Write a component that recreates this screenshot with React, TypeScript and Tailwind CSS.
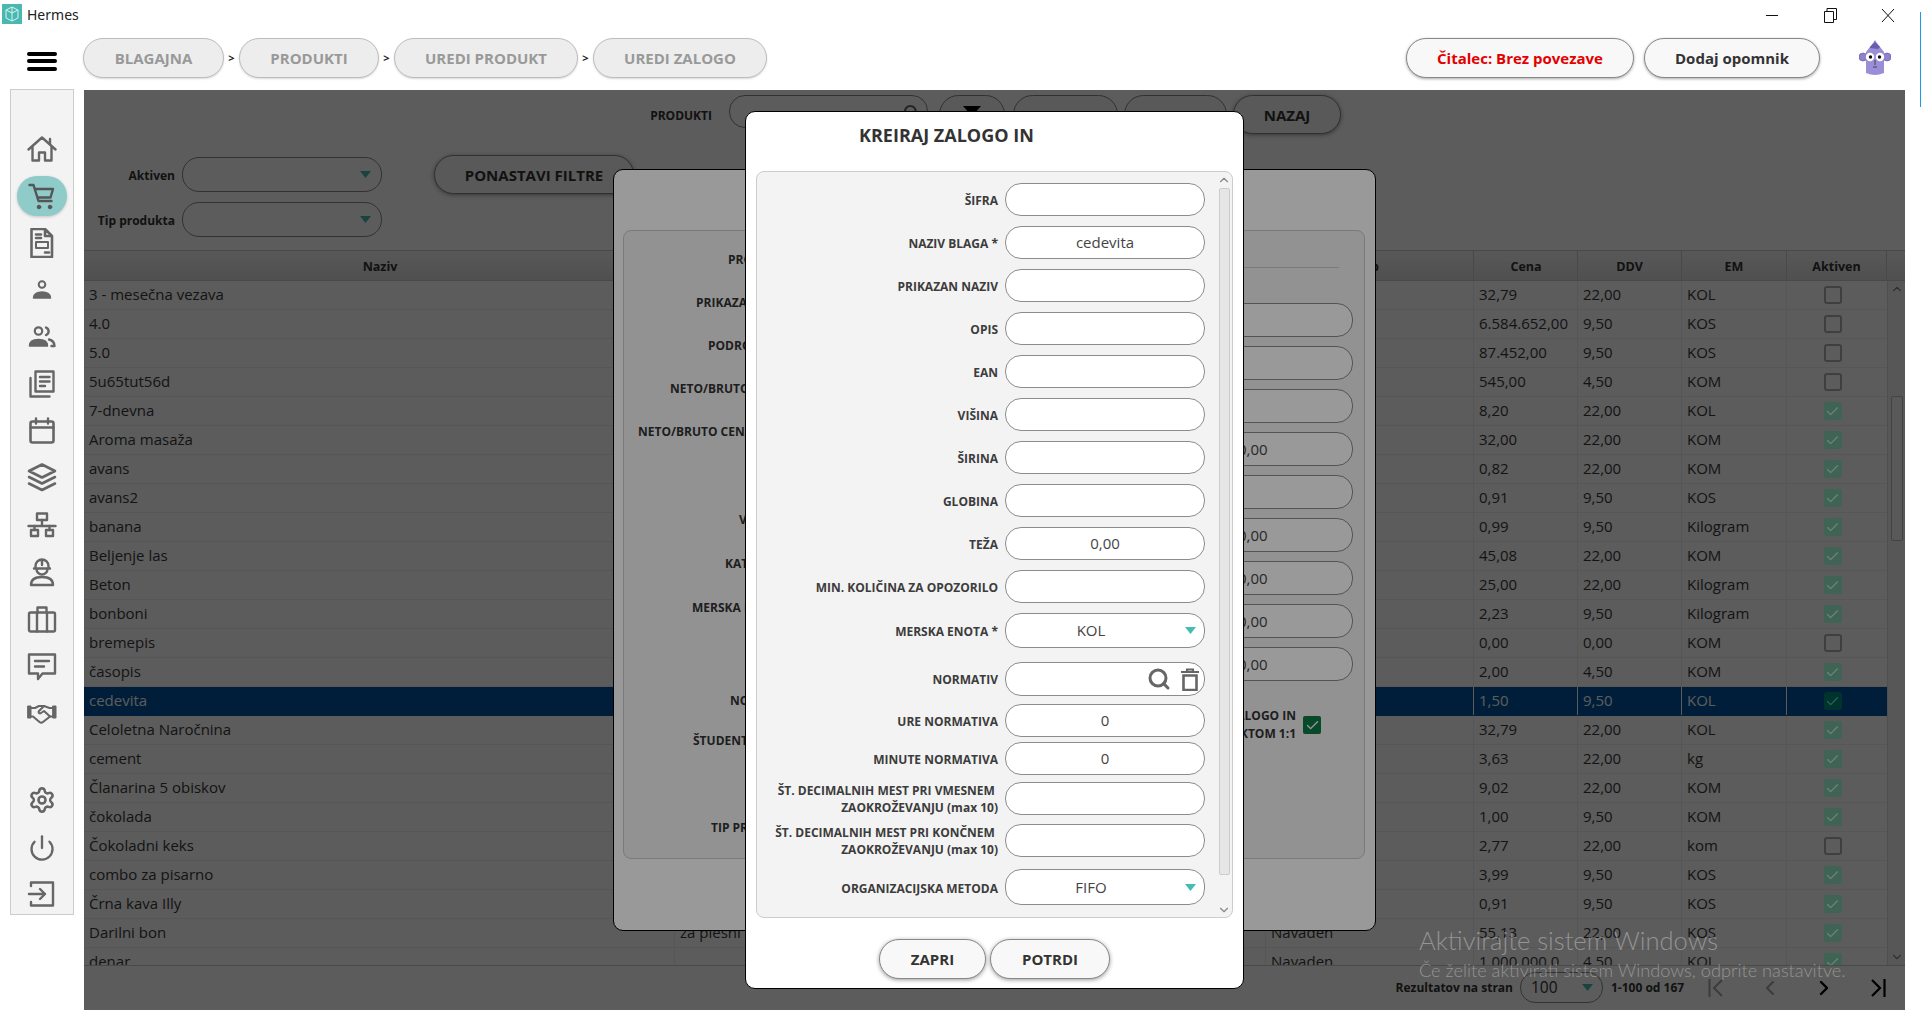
import React from 'react';
import { Check, ChevronDown, ChevronLeft, ChevronRight, ChevronUp, Power, Search, Settings } from 'lucide-react';

const rows = [
  ['3 - mesečna vezava', '', '', '32,79', '22,00', 'KOL', false],
  ['4.0', '', '', '6.584.652,00', '9,50', 'KOS', false],
  ['5.0', '', '', '87.452,00', '9,50', 'KOS', false],
  ['5u65tut56d', '', '', '545,00', '4,50', 'KOM', false],
  ['7-dnevna', '', '', '8,20', '22,00', 'KOL', true],
  ['Aroma masaža', '', '', '32,00', '22,00', 'KOM', true],
  ['avans', '', '', '0,82', '22,00', 'KOM', true],
  ['avans2', '', '', '0,91', '9,50', 'KOS', true],
  ['banana', '', '', '0,99', '9,50', 'Kilogram', true],
  ['Beljenje las', '', '', '45,08', '22,00', 'KOM', true],
  ['Beton', '', '', '25,00', '22,00', 'Kilogram', true],
  ['bonboni', '', '', '2,23', '9,50', 'Kilogram', true],
  ['bremepis', '', '', '0,00', '0,00', 'KOM', false],
  ['časopis', '', '', '2,00', '4,50', 'KOM', true],
  ['cedevita', '', '', '1,50', '9,50', 'KOL', true],
  ['Celoletna Naročnina', '', '', '32,79', '22,00', 'KOL', true],
  ['cement', '', '', '3,63', '22,00', 'kg', true],
  ['Članarina 5 obiskov', '', '', '9,02', '22,00', 'KOM', true],
  ['čokolada', '', '', '1,00', '9,50', 'KOM', true],
  ['Čokoladni keks', '', '', '2,77', '22,00', 'kom', false],
  ['combo za pisarno', '', '', '3,99', '9,50', 'KOS', true],
  ['Črna kava Illy', '', '', '0,91', '9,50', 'KOS', true],
  ['Darilni bon', 'za plesni', 'Navaden', '55,13', '22,00', 'KOS', true],
  ['denar', '', 'Navaden', '1.000.000,0', '4,50', 'KOL', true],
] as const;

const backLabels = [
  { text: 'PRODUKT', cls: 'h-[43px] pl-[103px]' },
  { text: 'PRIKAZAN NAZIV', cls: 'h-[43px] pl-[71px]' },
  { text: 'PODROČJE', cls: 'h-[43px] pl-[83px]' },
  { text: 'NETO/BRUTO', cls: 'h-[43px] pl-[45px]' },
  { text: 'NETO/BRUTO CENA', cls: 'h-[43px] pl-[13px]' },
  { text: 'VIŠINA', cls: 'mt-[45px] h-[44px] pl-[114px]' },
  { text: 'KATEGORIJA', cls: 'h-[44px] pl-[100px]' },
  { text: 'MERSKA ENOTA', cls: 'h-[43px] pl-[67px]' },
  { text: 'NORMATIV', cls: 'mt-[50px] h-[43px] pl-[105px]' },
  { text: 'ŠTUDENTSKI', cls: 'h-[37px] pl-[68px]' },
  { text: 'TIP PRODUKTA', cls: 'mt-[47px] h-[43px] pl-[86px]' },
];

const backInputs = ['', '', '', '0,00', '', '0,00', '0,00', '0,00', '0,00'];

const formRows = [
  { label: 'ŠIFRA', cls: 'h-[33px]', kind: 'input', value: '' },
  { label: 'NAZIV BLAGA *', cls: 'mt-[10px] h-[33px]', kind: 'input', value: 'cedevita' },
  { label: 'PRIKAZAN NAZIV', cls: 'mt-[10px] h-[33px]', kind: 'input', value: '' },
  { label: 'OPIS', cls: 'mt-[10px] h-[33px]', kind: 'input', value: '' },
  { label: 'EAN', cls: 'mt-[10px] h-[33px]', kind: 'input', value: '' },
  { label: 'VIŠINA', cls: 'mt-[10px] h-[33px]', kind: 'input', value: '' },
  { label: 'ŠIRINA', cls: 'mt-[10px] h-[33px]', kind: 'input', value: '' },
  { label: 'GLOBINA', cls: 'mt-[10px] h-[33px]', kind: 'input', value: '' },
  { label: 'TEŽA', cls: 'mt-[10px] h-[33px]', kind: 'input', value: '0,00' },
  { label: 'MIN. KOLIČINA ZA OPOZORILO', cls: 'mt-[10px] h-[33px]', kind: 'input', value: '' },
  { label: 'MERSKA ENOTA *', cls: 'mt-[10px] h-[35px]', kind: 'select', value: 'KOL' },
  { label: 'NORMATIV', cls: 'mt-[14px] h-[34px]', kind: 'search', value: '' },
  { label: 'URE NORMATIVA', cls: 'mt-[8px] h-[33px]', kind: 'input', value: '0' },
  { label: 'MINUTE NORMATIVA', cls: 'mt-[5px] h-[33px]', kind: 'input', value: '0' },
  { label: 'ŠT. DECIMALNIH MEST PRI VMESNEM\u00a0', label2: 'ZAOKROŽEVANJU (max 10)', cls: 'mt-[7px] h-[33px]', kind: 'input', value: '' },
  { label: 'ŠT. DECIMALNIH MEST PRI KONČNEM\u00a0', label2: 'ZAOKROŽEVANJU (max 10)', cls: 'mt-[9px] h-[33px]', kind: 'input', value: '' },
  { label: 'ORGANIZACIJSKA METODA', cls: 'mt-[12px] h-[36px]', kind: 'select', value: 'FIFO' },
];

const Caret = () => (
  <svg width="11" height="7" viewBox="0 0 11 7" className="shrink-0">
    <path d="M0 0h11L5.5 7z" fill="#45bdb2" />
  </svg>
);

const NavIcon = ({ children }: { children: React.ReactNode }) => (
  <svg width="30" height="30" viewBox="0 0 30 30" fill="none" stroke="#666" strokeWidth="2.4" strokeLinejoin="round" strokeLinecap="round">
    {children}
  </svg>
);

const sideIcons = [
  <NavIcon key="home"><path d="M1.5 15.5 15 3.5l13.5 12M5.5 12.5v14h6.5v-8h6v8h6.5v-14M23 5v5" /></NavIcon>,
  <NavIcon key="cart"><path d="M2.5 4h4l5 16h13M8 8h18l-2.5 8.5H10.5" stroke="#555" /><circle cx="12" cy="26" r="1.8" fill="#555" stroke="#555" strokeWidth="1" /><circle cx="23" cy="26" r="1.8" fill="#555" stroke="#555" strokeWidth="1" /></NavIcon>,
  <NavIcon key="doc"><path d="M4.500 1h13.500l7 7v21H4.500zM18 1v7h7M9 6.500h5M9 10h5M18 24.500h4" strokeWidth="2.600" /><rect x="9" y="14" width="12" height="6" strokeWidth="2" /></NavIcon>,
  <NavIcon key="user"><circle cx="15" cy="9.500" r="3.300" strokeWidth="2" /><path d="M6.500 23c0-4 4-6 8.500-6s8.500 2 8.500 6z" fill="#666" strokeWidth="1.500" /></NavIcon>,
  <NavIcon key="users"><circle cx="11.500" cy="9" r="3.700" strokeWidth="2.200" /><path d="M2.500 24c0-4.500 4-6.500 9-6.500s9 2 9 6.500z" fill="#666" strokeWidth="1.500" /><path d="M19 5.500a4 4 0 0 1 0 7.500M22 17.500c3 .8 5.500 2.800 5.500 6.500h-3" /></NavIcon>,
  <NavIcon key="news"><path d="M3.500 9v18.500h19" /><rect x="8.500" y="2.500" width="18" height="20" /><path d="M13 8h9.500M13 12.500h9.500M13 17h5" /></NavIcon>,
  <NavIcon key="cal"><rect x="3.500" y="5.500" width="23" height="21" rx="2" strokeWidth="2.600" /><path d="M3.500 11.500h23M9 2.500v5M21 2.500v5" /></NavIcon>,
  <NavIcon key="layers"><path d="M15 1.500 28 8 15 14.500 2 8zM2 14l13 6.500L28 14M2 20.500 15 27l13-6.500" strokeWidth="2.600" /></NavIcon>,
  <NavIcon key="net"><rect x="10" y="3.500" width="10" height="6.500" /><path d="M15 10v6M1.500 16h27" /><rect x="4" y="20" width="7" height="6" /><rect x="19" y="20" width="7" height="6" /><path d="M7.500 16v4M22.500 16v4" /></NavIcon>,
  <NavIcon key="worker"><path d="M8.500 11.500V9a6.500 6.500 0 0 1 13 0v2.500zM15 3v5M7 11.500h16M9.500 12a5.500 5.500 0 0 0 11 0" /><path d="M4 28c0-6 5-8 11-8s11 2 11 8z" /></NavIcon>,
  <NavIcon key="case"><rect x="2" y="8.500" width="26" height="19" rx="1.500" /><path d="M10.500 8.500V3.500h9v5M10 8.500v19M20 8.500v19" /></NavIcon>,
  <NavIcon key="chat"><path d="M2 3.500h26v19H15.500L11 28v-5.500H2z" /><path d="M8 10h14M8 15.500h9" /></NavIcon>,
  <NavIcon key="hands">
    <path d="M1 8h3v12H1zM26 8h3v12h-3z" fill="#666" strokeWidth="1" />
    <path d="M4.500 10H8l4-2h5l5.500 2H26M4.500 18.500H6l6.500 5.500c1 .8 2.500 .8 3.500 0l7-5.500h3" strokeWidth="2.100" />
    <path d="m17 8-5 5c-1.200 1.400.5 3 2 2l3-2 6 5.500" strokeWidth="2.100" />
  </NavIcon>,
];

const FormLabel = ({ row }: { row: (typeof formRows)[number] }) => (
  <div className={`w-[241px] text-right text-[12px] leading-[17px] font-bold text-[#3c3c3c] whitespace-nowrap ${row.label2 || row.kind === 'search' ? '' : 'pt-[2px]'}`}>
    {row.label}
    {row.label2 && <br />}
    {row.label2}
  </div>
);

const FormField = ({ row }: { row: (typeof formRows)[number] }) => (
  <div className="ml-[7px] w-[200px] h-full flex items-center rounded-[16px] border-[1.5px] border-[#8c8c8c] bg-white text-[15px] text-[#444]">
    {row.kind === 'input' && <span className="flex-1 text-center">{row.value}</span>}
    {row.kind === 'select' && (
      <>
        <span className="flex-1 text-center">{row.value}</span>
        <span className="w-[28px] flex justify-center"><Caret /></span>
      </>
    )}
    {row.kind === 'search' && (
      <span className="ml-auto mr-[5px] flex items-center gap-[10px]">
        <Search size={24} color="#666" strokeWidth={3} />
        <svg width="18" height="23" viewBox="0 0 18 23" fill="none" stroke="#666" strokeWidth="2.2">
          <path d="M0 4h18M6 4V1.500h6V4" />
          <path d="M2.500 7.500h13V22h-13z" strokeWidth="2.600" />
        </svg>
      </span>
    )}
  </div>
);

const FrontModal = () => (
  <div className="absolute left-[661px] top-[21px] w-[499px] h-[878px] rounded-[10px] border border-black bg-white flex flex-col items-center">
    <div className="h-[59px] w-full shrink-0 pl-[113px] pt-[11px] text-[18px] leading-[25px] font-bold text-[#333]">KREIRAJ ZALOGO IN</div>
    <div className="w-[477px] h-[747px] shrink-0 rounded-[8px] border border-[#ccc] bg-[#f3f3f3] flex">
      <div className="flex-1 pt-[11px] flex flex-col">
        {formRows.map(row => (
          <div key={row.label} className={`flex items-center ${row.cls}`}>
            <FormLabel row={row} />
            <FormField row={row} />
          </div>
        ))}
      </div>
      <div className="w-[16px] shrink-0 flex flex-col items-center text-[#888]">
        <ChevronUp size={14} className="mt-[1px] shrink-0" />
        <div className="w-[11px] h-[688px] mt-[1px] rounded-[2px] border border-[#ccc] bg-[#e6e6e6]" />
        <ChevronDown size={14} className="mt-[28px] shrink-0" />
      </div>
    </div>
    <div className="mt-[21px] flex gap-[4px] self-start ml-[133px]">
      <div className="w-[107px] h-[40px] pt-[1px] rounded-[20px] border-[1.5px] border-[#888] bg-[#f8f8f8] shadow-[0_1px_4px_rgba(0,0,0,0.4)] flex items-center justify-center text-[15px] font-bold text-[#333]">ZAPRI</div>
      <div className="w-[120px] h-[40px] pt-[1px] rounded-[20px] border-[1.5px] border-[#888] bg-[#f8f8f8] shadow-[0_1px_4px_rgba(0,0,0,0.4)] flex items-center justify-center text-[15px] font-bold text-[#333]">POTRDI</div>
    </div>
  </div>
);

const BackModal = () => (
  <div className="absolute left-[529px] top-[79px] w-[763px] h-[762px] rounded-[10px] border border-black bg-white">
    <div className="ml-[9px] mt-[60px] w-[742px] h-[629px] rounded-[8px] border border-[#ccc] bg-[#f3f3f3] flex">
      <div className="w-[380px] pl-[1px] pt-[7px] flex flex-col text-[12px] font-bold text-[#333] whitespace-nowrap">
        {backLabels.map(l => (
          <div key={l.text} className={`flex items-center ${l.cls}`}>{l.text}</div>
        ))}
      </div>
      <div className="ml-auto mr-[11px] w-[205px] pt-[36px] flex flex-col">
        <div className="w-[191px] h-px bg-[#ccc] mb-[35px]" />
        <div className="flex flex-col gap-[9px]">
          {backInputs.map((v, i) => (
            <div key={i} className="h-[34px] rounded-[16px] border-[1.5px] border-[#8c8c8c] bg-white flex items-center pl-[89px] text-[15px] text-[#444]">{v}</div>
          ))}
        </div>
        <div className="mt-[26px] flex items-center">
          <div className="w-[148px] text-right text-[12px] leading-[18px] font-bold text-[#333] whitespace-nowrap">ZALOGO IN<br />PRODUKTOM 1:1</div>
          <div className="ml-[7px] w-[18px] h-[18px] rounded-[2px] bg-[#0c7b43] flex items-center justify-center">
            <Check size={15} color="#fff" strokeWidth={2.2} />
          </div>
        </div>
      </div>
    </div>
  </div>
);

const Cell = ({ w, selected, children }: { w: string; selected: boolean; children: React.ReactNode }) => (
  <div className={`${w} h-full shrink-0 flex items-center pl-[5px] pb-[2px] whitespace-nowrap overflow-hidden border-r ${selected ? 'border-white' : 'border-[#eee]'}`}>{children}</div>
);

const TableRow = ({ row, selected }: { row: (typeof rows)[number]; selected: boolean }) => (
  <div className={`h-[29px] shrink-0 flex border-b ${selected ? 'bg-[#0056a1] text-white border-[#0056a1]' : 'bg-white text-[#3a3a3a] border-[#eee]'}`}>
    <Cell w="w-[591px]" selected={selected}>{row[0]}</Cell>
    <Cell w="w-[591px]" selected={selected}>{row[1]}</Cell>
    <Cell w="w-[208px]" selected={selected}>{row[2]}</Cell>
    <Cell w="w-[104px]" selected={selected}>{row[3]}</Cell>
    <Cell w="w-[104px]" selected={selected}>{row[4]}</Cell>
    <Cell w="w-[105px]" selected={selected}>{row[5]}</Cell>
    <div className="w-[100px] h-full shrink-0 flex items-center justify-center pr-[9px]">
      {row[6] ? (
        <div className={`relative z-50 w-[18px] h-[18px] rounded-[3px] flex items-center justify-center ${selected ? 'bg-[#00332e]' : 'bg-[#3f6355]'}`}>
          <Check size={15} color={selected ? '#2e6658' : '#72847a'} strokeWidth={1.8} />
        </div>
      ) : (
        <div className="w-[18px] h-[18px] rounded-[3px] border-2 border-[#b0b0b0]" />
      )}
    </div>
  </div>
);

const Main = () => (
  <main className="relative w-[1821px] h-[920px] bg-white overflow-hidden flex flex-col text-[#333]">
    <div className="h-[160px] shrink-0 pt-[5px]">
      <div className="flex">
        <div className="w-[628px] h-[39px] pt-[2px] flex items-center justify-end text-[12px] font-bold">PRODUKTI</div>
        <div className="ml-[17px] w-[199px] h-[33px] rounded-[16px] border-[1.5px] border-[#8c8c8c] flex items-center justify-end pr-[8px]"><Search size={16} color="#666" strokeWidth={3} /></div>
        <div className="ml-[11px] w-[66px] h-[39px] rounded-[20px] border-[1.5px] border-[#888] bg-[#f8f8f8] flex justify-center pt-[10px]">
          <svg width="18" height="18" viewBox="0 0 18 18"><path d="M0 0h18l-7 8v9l-4-3V8z" fill="#000" /></svg>
        </div>
        <div className="ml-[8px] w-[105px] h-[39px] rounded-[20px] border-[1.5px] border-[#888] bg-[#f8f8f8]" />
        <div className="ml-[6px] w-[103px] h-[39px] rounded-[20px] border-[1.5px] border-[#888] bg-[#f8f8f8]" />
        <div className="ml-[6px] w-[108px] h-[39px] pt-[1px] rounded-[20px] border-[1.5px] border-[#888] bg-[#f8f8f8] shadow-[0_1px_4px_rgba(0,0,0,0.4)] flex items-center justify-center text-[15px] font-bold">NAZAJ</div>
      </div>
      <div className="mt-[21px] flex items-start">
        <div className="pt-[2px] flex flex-col gap-[10px]">
          {['Aktiven', 'Tip produkta'].map(t => (
            <div key={t} className="flex items-center h-[35px]">
              <div className="w-[91px] pt-[2px] text-right text-[12px] font-bold">{t}</div>
              <div className="ml-[7px] w-[200px] h-[35px] rounded-[17px] border-[1.5px] border-[#8c8c8c] flex items-center justify-end pr-[10px]"><Caret /></div>
            </div>
          ))}
        </div>
        <div className="ml-[52px] w-[200px] h-[39px] pt-[1px] rounded-[20px] border-[1.5px] border-[#888] bg-[#f8f8f8] shadow-[0_1px_4px_rgba(0,0,0,0.4)] flex items-center justify-center text-[15px] font-bold">PONASTAVI FILTRE</div>
      </div>
    </div>

    <div className="h-[31px] shrink-0 flex text-[12.5px] font-bold border-y border-[#ccc] bg-gradient-to-b from-[#f6f6f6] to-[#dedede]">
      {[['Naziv', 'w-[591px] pl-[2px]'], ['', 'w-[591px]'], ['Tip', 'w-[208px]'], ['Cena', 'w-[104px] pl-[1px]'], ['DDV', 'w-[104px]'], ['EM', 'w-[105px]'], ['Aktiven', 'w-[100px]']].map(([t, w]) => (
        <div key={t + w} className={`${w} shrink-0 flex items-center justify-center pt-[3px] border-r border-[#ccc]`}>{t}</div>
      ))}
    </div>

    <div className="h-[685px] shrink-0 flex overflow-hidden text-[15px] border-b border-[#ccc]">
      <div className="w-[1803px] shrink-0 flex flex-col">
        {rows.map((r, i) => <TableRow key={r[0]} row={r} selected={i === 14} />)}
      </div>
      <div className="w-[18px] shrink-0 flex flex-col items-center bg-[#f3f3f3] text-[#888] border-l border-[#ddd]">
        <ChevronUp size={14} className="mt-[1px] shrink-0" />
        <div className="mt-[100px] w-[12px] h-[145px] rounded-[2px] border border-[#bbb] bg-[#f8f8f8]" />
        <ChevronDown size={14} className="mt-auto mb-[1px] shrink-0" />
      </div>
    </div>

    <div className="flex-1 flex items-center justify-end text-[12px] font-bold pb-[1px]">
      <span className="whitespace-nowrap">Rezultatov na stran</span>
      <div className="ml-[7px] w-[83px] h-[31px] rounded-[15px] border-[1.5px] border-[#8c8c8c] flex items-center justify-between pl-[10px] pr-[9px] text-[15.5px] font-normal">100<Caret /></div>
      <span className="ml-[8px] w-[78px] whitespace-nowrap">1-100 od 167</span>
      <div className="w-[54px] flex justify-center"><svg width="16" height="20" viewBox="0 0 16 20" fill="none" stroke="#a8a8a8" strokeWidth="2"><path d="M1.500 1v18M14 2 6 10l8 8" /></svg></div>
      <div className="w-[54px] flex justify-center"><ChevronLeft size={24} color="#a8a8a8" strokeWidth={2} /></div>
      <div className="w-[54px] flex justify-center"><ChevronRight size={24} color="#000" strokeWidth={2.4} /></div>
      <div className="w-[54px] flex justify-center"><svg width="16" height="20" viewBox="0 0 16 20" fill="none" stroke="#000" strokeWidth="2.2"><path d="M14.500 1v18M2 2l8 8-8 8" /></svg></div>
    </div>

    <div className="absolute inset-0 bg-black/40" />
    <BackModal />
    <div className="absolute inset-0 bg-black/40" />
    <FrontModal />
  </main>
);

const Pill = ({ w, children }: { w: string; children: React.ReactNode }) => (
  <div className={`${w} h-[40px] rounded-[20px] border-[1.5px] border-[#bdbdbd] bg-[#ededed] flex items-center justify-center text-[15px] font-bold text-[#999] shadow-[0_1px_2px_rgba(0,0,0,0.15)]`}>{children}</div>
);

const Sep = () => <div className="w-[15px] text-center text-[11px] font-bold text-[#222]">&gt;</div>;

export default function App() {
  return (
    <div className="relative w-[1921px] h-[1028px] overflow-hidden bg-white font-['Open_Sans',sans-serif]">
      {/* title bar */}
      <div className="h-[30px] flex items-center">
        <div className="ml-[2px] mt-[-2px] w-[20px] h-[20px] bg-[#48b8b0] flex items-center justify-center">
          <svg width="14" height="16" viewBox="0 0 14 16" fill="none" stroke="#d8f2ef" strokeWidth="1"><path d="M7 1 1 4v8l6 3 6-3V4zM7 1v14M1 4l6 3 6-3" /></svg>
        </div>
        <span className="ml-[5px] mt-[-1px] text-[14px] text-[#222] font-['Noto_Sans',sans-serif]">Hermes</span>
        <div className="ml-auto flex items-center text-[#111]">
          <div className="w-[58px] flex justify-center"><div className="w-[12px] h-px bg-[#111]" /></div>
          <div className="w-[58px] flex justify-center">
            <svg width="13" height="15" viewBox="0 0 13 15" fill="none" stroke="#111"><path d="M.5 3.500h9v11h-9zM3 3.500V.5h9.500v11H9.500" /></svg>
          </div>
          <div className="w-[58px] flex justify-center mr-[4px]">
            <svg width="14" height="15" viewBox="0 0 14 15" fill="none" stroke="#111"><path d="m1 1 12 13M13 1 1 14" /></svg>
          </div>
        </div>
      </div>

      {/* top bar */}
      <div className="h-[60px] flex items-start pt-[8px]">
        <div className="w-[83px] h-[40px] flex flex-col items-center justify-center gap-[3.500px] mt-[3px]">
          <div className="w-[30px] h-[4px] rounded-full bg-black" />
          <div className="w-[30px] h-[4px] rounded-full bg-black" />
          <div className="w-[30px] h-[4px] rounded-full bg-black" />
        </div>
        <div className="flex items-center">
          <Pill w="w-[141px]">BLAGAJNA</Pill>
          <Sep />
          <Pill w="w-[140px]">PRODUKTI</Pill>
          <Sep />
          <Pill w="w-[184px]">UREDI PRODUKT</Pill>
          <Sep />
          <Pill w="w-[174px]">UREDI ZALOGO</Pill>
        </div>
        <div className="ml-auto flex items-center">
          <div className="w-[228px] h-[40px] rounded-[20px] border-[1.5px] border-[#888] bg-[#f8f8f8] shadow-[0_1px_3px_rgba(0,0,0,0.35)] flex items-center justify-center text-[15px] font-bold text-[#e30000]">Čitalec: Brez povezave</div>
          <div className="ml-[10px] w-[176px] h-[40px] rounded-[20px] border-[1.5px] border-[#888] bg-[#f8f8f8] shadow-[0_1px_3px_rgba(0,0,0,0.35)] flex items-center justify-center text-[15px] font-bold text-[#333]">Dodaj opomnik</div>
          <div className="ml-[39px] mr-[30px] w-[32px] h-[38px]">
            <svg width="32" height="38" viewBox="0 0 32 38">
              <circle cx="4" cy="18" r="4" fill="#8f82cf" stroke="#5d51a0" strokeWidth=".6" />
              <circle cx="28" cy="18" r="4" fill="#8f82cf" stroke="#5d51a0" strokeWidth=".6" />
              <path d="M7 34V13l7-9 2-3 2 3 7 9v21q-9 4-18 0z" fill="#9a8ed8" />
              <path d="M11 8l5-5 5 5-2 2-8-1z" fill="#6a5bb0" />
              <circle cx="11" cy="18" r="4.200" fill="#fff" />
              <circle cx="21" cy="18" r="4.200" fill="#fff" />
              <circle cx="11.500" cy="18" r="1.700" fill="#111" />
              <circle cx="20.500" cy="18" r="1.700" fill="#111" />
              <path d="M16 21v5M14 28h4" stroke="#333" strokeWidth=".8" />
            </svg>
          </div>
        </div>
      </div>

      {/* body */}
      <div className="flex items-start">
        <aside className="ml-[10px] w-[64px] h-[826px] shrink-0 border border-[#ccc] bg-[#f3f3f3] flex flex-col items-center pt-[39px] mt-[-1px]">
          <div className="flex flex-col items-center">
            {sideIcons.map((icon, i) => (
              <div key={i} className={`w-[50px] h-[40px] mb-[7px] flex items-center justify-center ${i === 1 ? 'rounded-[25px] bg-[#8fcbc8] shadow-[0_1px_3px_rgba(0,0,0,0.2)]' : ''}`}>{icon}</div>
            ))}
          </div>
          <div className="w-[50px] h-[40px] mt-[40px] mb-[8px] flex items-center justify-center"><Settings size={28} color="#666" strokeWidth={2.2} /></div>
          <div className="w-[50px] h-[40px] mb-[6px] flex items-center justify-center"><Power size={28} color="#666" strokeWidth={2} /></div>
          <div className="w-[50px] h-[40px] flex items-center justify-center">
            <NavIcon><path d="M4 7V3.500h22v23H4V23M2 15h16M13 10l5 5-5 5" /></NavIcon>
          </div>
        </aside>
        <div className="ml-[10px]"><Main /></div>
      </div>

      {/* windows watermark */}
      <div className="absolute z-[60] left-[1419px] top-[922px] pointer-events-none text-white/35 font-['Lato',sans-serif] font-light whitespace-nowrap">
        <div className="text-[25.6px] leading-[36px]">Aktivirajte sistem Windows</div>
        <div className="text-[18.2px] leading-[24px]">Če želite aktivirati sistem Windows, odprite nastavitve.</div>
      </div>
      {/* neighbouring window edge */}
      <div className="absolute right-0 top-[12px] w-px h-[95px] bg-[#1e9be8]" />
    </div>
  );
}
